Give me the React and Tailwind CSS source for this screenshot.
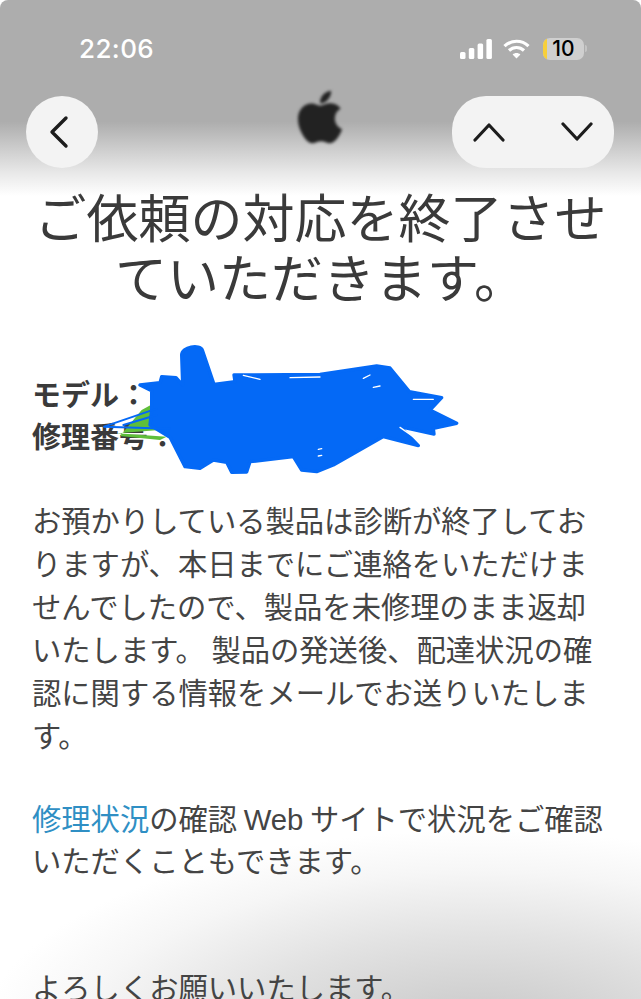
import React from 'react';
import { FaApple } from 'react-icons/fa';

const BODY_LINES = [
  'お預かりしている製品は診断が終了してお',
  'りますが、本日までにご連絡をいただけま',
  'せんでしたので、製品を未修理のまま返却',
  'いたします。 製品の発送後、配達状況の確',
  '認に関する情報をメールでお送りいたしま',
  'す。',
];

const StatusBar = () => (
  <div className="flex items-center justify-between h-[22px] mt-[38px] pl-[79px] pr-[54px]">
    <span className="text-[26px] leading-[22px] font-medium text-white font-['Inter',sans-serif] tracking-[0.4px]">22:06</span>
    <div className="flex items-center -mt-[1px]">
      <svg width="32" height="20" viewBox="0 0 32 20" fill="#fff">
        <rect x="0" y="13" width="5.5" height="7" rx="1.5" />
        <rect x="8.8" y="9" width="5.5" height="11" rx="1.5" />
        <rect x="17.6" y="4.5" width="5.5" height="15.5" rx="1.5" />
        <rect x="26.4" y="0" width="5.5" height="20" rx="1.5" />
      </svg>
      <svg className="ml-[11px]" width="27" height="20" viewBox="0 0 27 20" fill="none" stroke="#fff" strokeWidth="3.2">
        <path d="M1.5 7.2C8.2 .6 18.8 .6 25.5 7.2" />
        <path d="M6 11.5c4.2-4 10.8-4 15 0" />
        <path d="M13.5 19.5 9.6 15.4c2.2-2 5.6-2 7.8 0z" fill="#fff" stroke="none" />
      </svg>
      <div className="relative ml-[13px] w-[41px] h-[22px] rounded-[7px] overflow-hidden bg-[#cfcfcf] flex items-center justify-center">
        <div className="absolute left-0 top-0 bottom-0 w-[4px] bg-[#f7cf3a]" />
        <span className="relative text-[21px] leading-none font-medium text-black font-['Inter',sans-serif]">10</span>
      </div>
      <div className="ml-[1px] w-[2px] h-[7px] rounded-r-full bg-[#c4c4c4]" />
    </div>
  </div>
);

const NavBar = () => (
  <div className="flex items-center justify-between mt-[36px] pl-[26px] pr-[27px] h-[72px]">
    <div className="w-[162px]">
      <div className="w-[72px] h-[72px] rounded-full bg-[#f3f3f3] flex items-center pl-[21px]">
        <svg width="24" height="34" viewBox="0 0 24 34" fill="none" stroke="#1c1c1c" strokeWidth="3.4" strokeLinecap="round" strokeLinejoin="round">
          <path d="M19 3 5 17l14 14" />
        </svg>
      </div>
    </div>
    <FaApple className="text-[#222] blur-[1.4px] w-[52px] h-[60px] -mt-[30px]" />
    <div className="w-[162px] h-[72px] rounded-[34px] bg-[#f3f3f3] flex items-center justify-between pl-[21px] pr-[21px]">
      <svg width="32" height="20" viewBox="0 0 32 20" fill="none" stroke="#1c1c1c" strokeWidth="3.2" strokeLinecap="round" strokeLinejoin="round">
        <path d="M2 18 16 3l14 15" />
      </svg>
      <svg width="32" height="20" viewBox="0 0 32 20" fill="none" stroke="#1c1c1c" strokeWidth="3.2" strokeLinecap="round" strokeLinejoin="round">
        <path d="M2 2l14 15L30 2" />
      </svg>
    </div>
  </div>
);

// pen scribble hiding the model and repair numbers
const Scribble = () => (
  <svg className="absolute left-0 top-[330px]" width="480" height="160" viewBox="0 0 1440 480">
    <path d="M425 240 470 215 480 300 350 310 500 320 480 330 360 318z" fill="#5fbf3a" />
    <path
      d="M545 75C545 50 600 42 607 60L642 163 705 155 702 135 960 133 1130 108 1170 114 1228 185 1325 203 1290 240 1370 280 1300 295 1302 312 1200 290 1255 347 1150 320 1000 405 950 425 905 420 880 380 750 395 740 426 695 427 680 397 640 390 600 415 555 410 510 322 450 285 455 240 455 182 420 165 480 158 485 140 528 143 548 165z"
      fill="#0469f6"
      stroke="#0469f6"
      strokeWidth="10"
      strokeLinejoin="round"
    />
    <path d="M312 290 470 236M312 290 510 296M370 285 470 255" fill="none" stroke="#0469f6" strokeWidth="6" strokeLinecap="round" />
    <path d="M730 136 780 148M870 143 960 141M1090 145 1110 135M1120 172 1140 168M1240 208 1300 208M1200 292 1240 320M955 358 965 356M955 378 965 376" stroke="#fff" strokeWidth="4" strokeLinecap="round" />
  </svg>
);

const App = () => (
  <div className="relative w-[641px] h-[999px] overflow-hidden rounded-t-[8px] bg-[radial-gradient(ellipse_500px_210px_at_480px_1040px,#c4c4c4_0%,#e2e2e2_50%,#f6f6f6_80%,#ffffff_100%)] font-['Noto_Sans_CJK_JP',sans-serif] text-[#3a3a3a]">
    <div className="pt-[186px] px-[32px]">
      <h1 className="text-[52px] leading-[60px] font-normal text-center whitespace-nowrap -mx-[10px]">
        <div>ご依頼の対応を終了させ</div>
        <div>ていただきます。</div>
      </h1>

      <div className="mt-[66px] text-[29px] leading-[42px] font-bold">
        <div>モデル：</div>
        <div>修理番号：</div>
      </div>

      <div className="mt-[42px] text-[29.3px] leading-[43px] font-normal whitespace-nowrap text-[#444444]">
        {BODY_LINES.map(line => <div key={line}>{line}</div>)}
      </div>

      <div className="mt-[40px] text-[29.3px] leading-[43px] font-normal whitespace-nowrap text-[#444444]">
        <div className="h-[42px]"><span className="text-[#2f8fc4]">修理状況</span>の確認 <span className="font-['Liberation_Sans',sans-serif]">Web</span> サイトで状況をご確認</div>
        <div>いただくこともできます。</div>
      </div>

      <p className="mt-[84px] text-[29.3px] leading-[43px] font-normal text-[#444444]">よろしくお願いいたします。</p>
    </div>

    <Scribble />

    {/* blurred bar over the top of the mail */}
    <div className="absolute inset-x-0 top-0 h-[196px] bg-[linear-gradient(to_bottom,#adadad_0%,#adadad_62%,#e8e8e8_88%,rgba(255,255,255,0)_100%)]">
      <StatusBar />
      <NavBar />
    </div>
  </div>
);

export default App;
